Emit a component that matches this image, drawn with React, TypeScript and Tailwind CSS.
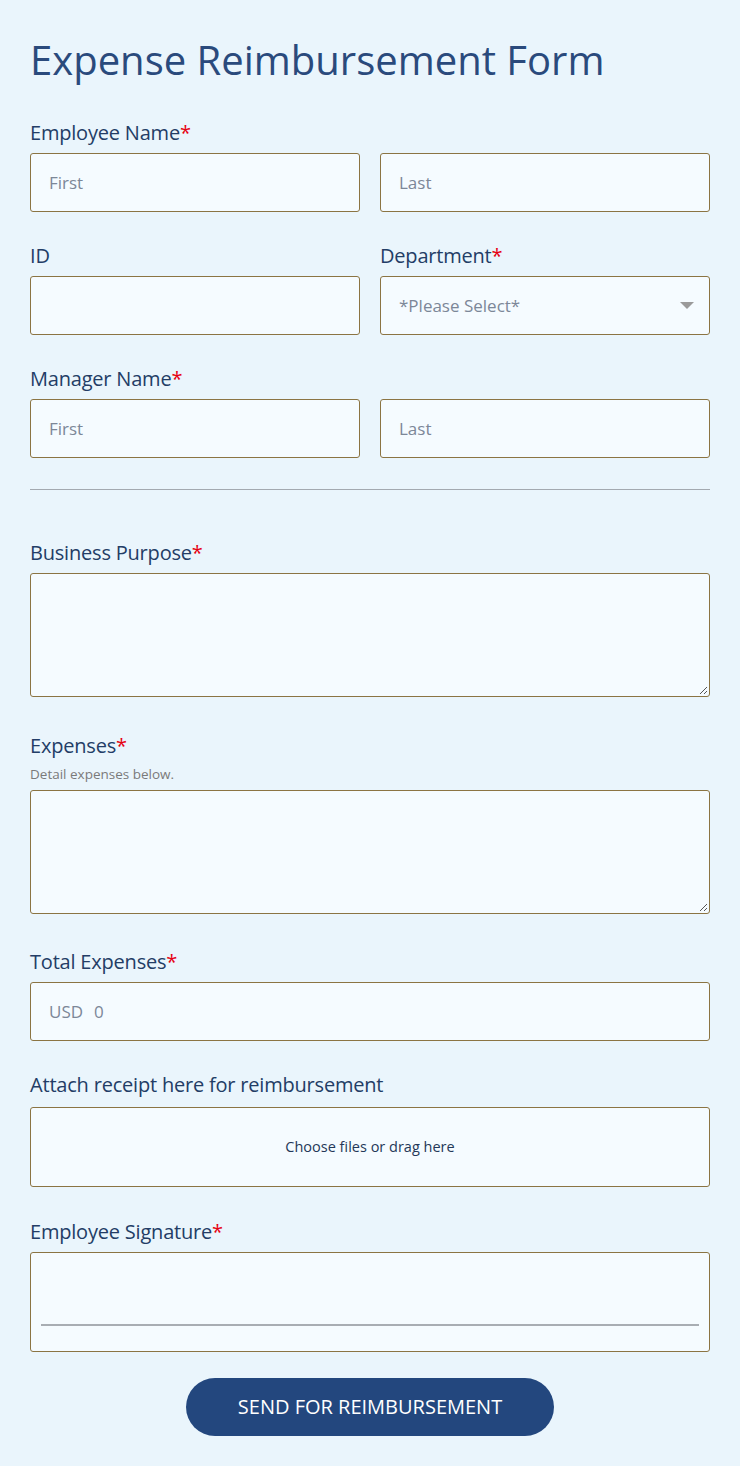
import React from "react";

const font = { fontFamily: '"Open Sans", "Noto Sans", sans-serif' };

function Label({ text, required }: { text: string; required?: boolean }) {
  return (
    <div className="text-[20px] leading-[24px] font-medium text-[#233d66] tracking-[-0.2px]">
      {text}
      {required && <span className="text-[#e60012]">*</span>}
    </div>
  );
}

function Input({ placeholder }: { placeholder?: string }) {
  return (
    <div className="h-[59px] rounded-[3px] border border-[#8b7443] bg-[#f5fbff] flex items-center px-[18px] text-[17px] text-[#7c8798]">
      {placeholder}
    </div>
  );
}

function TextArea() {
  return (
    <div className="relative h-[124px] rounded-[3px] border border-[#8b7443] bg-[#f5fbff]">
      <svg className="absolute right-[1px] bottom-[1px]" width="10" height="10" viewBox="0 0 10 10">
        <line x1="9" y1="2" x2="2" y2="9" stroke="#555" strokeWidth="1" />
        <line x1="9" y1="6" x2="6" y2="9" stroke="#555" strokeWidth="1" />
      </svg>
    </div>
  );
}

export default function App() {
  return (
    <div className="min-h-[1466px] bg-[#eaf5fc] px-[30px] pt-[33px]" style={font}>
      <h1 className="text-[40px] leading-[54px] text-[#2a4a7c] font-normal">
        Expense Reimbursement Form
      </h1>

      <div className="mt-[34px] flex flex-col gap-[8px]">
        <Label text="Employee Name" required />
        <div className="grid grid-cols-2 gap-[20px]">
          <Input placeholder="First" />
          <Input placeholder="Last" />
        </div>
      </div>

      <div className="mt-[32px] grid grid-cols-2 gap-[20px]">
        <div className="flex flex-col gap-[8px]">
          <Label text="ID" />
          <Input />
        </div>
        <div className="flex flex-col gap-[8px]">
          <Label text="Department" required />
          <div className="h-[59px] rounded-[3px] border border-[#8b7443] bg-[#f5fbff] flex items-center justify-between pl-[18px] pr-[15px] text-[17px] text-[#7c8798]">
            <span>*Please Select*</span>
            <svg width="14" height="8" viewBox="0 0 14 8">
              <polygon points="0,0 14,0 7,7" fill="#9a9a9a" />
            </svg>
          </div>
        </div>
      </div>

      <div className="mt-[32px] flex flex-col gap-[8px]">
        <Label text="Manager Name" required />
        <div className="grid grid-cols-2 gap-[20px]">
          <Input placeholder="First" />
          <Input placeholder="Last" />
        </div>
      </div>

      <div className="mt-[31px] h-px bg-[#a3a9b0]" />

      <div className="mt-[51px] flex flex-col gap-[8px]">
        <Label text="Business Purpose" required />
        <TextArea />
      </div>

      <div className="mt-[37px] flex flex-col">
        <Label text="Expenses" required />
        <div className="mt-[8px] text-[13.5px] leading-[16px] text-[#7a7a7a]">Detail expenses below.</div>
        <div className="mt-[8px]">
          <TextArea />
        </div>
      </div>

      <div className="mt-[36px] flex flex-col gap-[8px]">
        <Label text="Total Expenses" required />
        <div className="h-[59px] rounded-[3px] border border-[#8b7443] bg-[#f5fbff] flex items-center px-[18px] text-[17px] text-[#7c8798] gap-[11px]">
          <span>USD</span>
          <span>0</span>
        </div>
      </div>

      <div className="mt-[32px] flex flex-col gap-[10px]">
        <Label text="Attach receipt here for reimbursement" />
        <div className="h-[80px] rounded-[3px] border border-[#8b7443] bg-[#f5fbff] flex items-center justify-center text-[14.5px] text-[#243858]">
          Choose files or drag here
        </div>
      </div>

      <div className="mt-[33px] flex flex-col gap-[8px]">
        <Label text="Employee Signature" required />
        <div className="h-[100px] rounded-[3px] border border-[#8b7443] bg-[#f5fbff] flex flex-col justify-end px-[10px] pb-[25px]">
          <div className="h-[2px] bg-[#a8adb3]" />
        </div>
      </div>

      <div className="mt-[26px] flex justify-center">
        <button className="w-[368px] h-[58px] rounded-full bg-[#23477e] text-white text-[20px]">
          SEND FOR REIMBURSEMENT
        </button>
      </div>
    </div>
  );
}
